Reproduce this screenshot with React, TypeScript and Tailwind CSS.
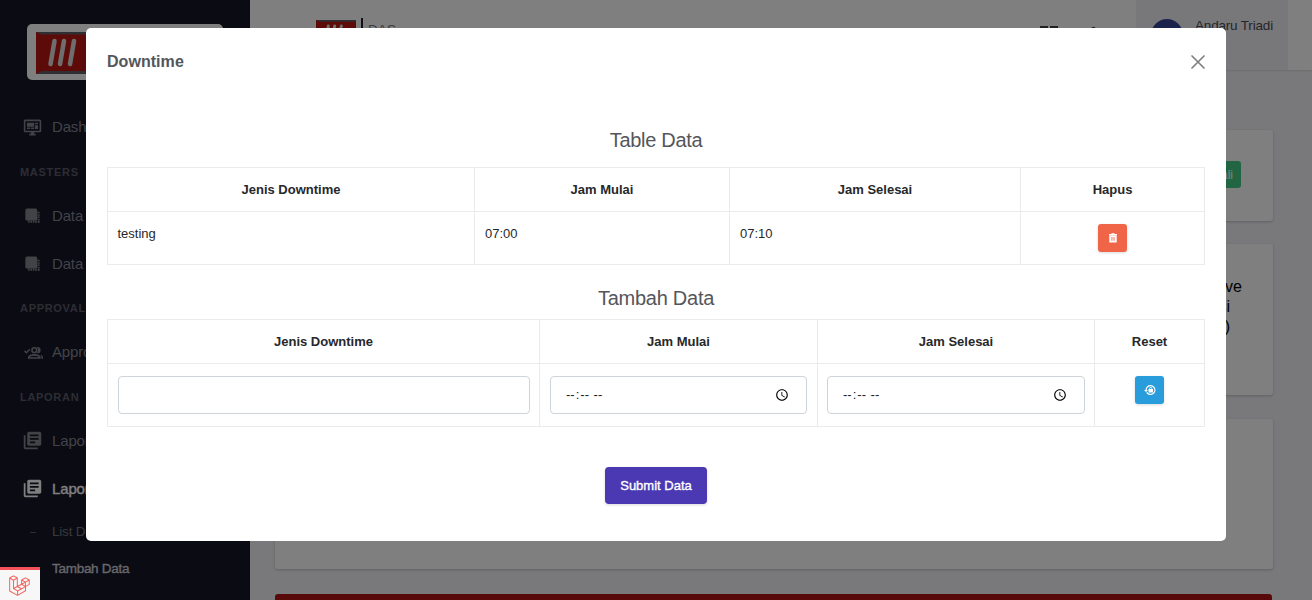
import type { ReactNode } from "react";

function Svg({ className, children }: { className: string; children: ReactNode }) {
  return (
    <svg viewBox="0 0 24 24" fill="currentColor" className={className}>
      {children}
    </svg>
  );
}

const DashboardIcon = () => (
  <Svg className="size-[19px]">
    <path d="M21,16V4H3V16H21M21,2A2,2 0 0,1 23,4V16A2,2 0 0,1 21,18H14V20H16V22H8V20H10V18H3C1.89,18 1,17.1 1,16V4C1,2.89 1.89,2 3,2H21M5,6H14V11H5V6M15,6H19V8H15V6M19,9V14H15V9H19M5,12H9V14H5V12M10,12H14V14H10V12Z" />
  </Svg>
);

const LayersIcon = () => (
  <Svg className="size-[19px]">
    <path d="M5 2H16a2 2 0 0 1 2 2V15a2 2 0 0 1-2 2H5a2 2 0 0 1-2-2V4a2 2 0 0 1 2-2ZM18.500 6h2.500v2h-2.500zM18.500 9h2.500v2h-2.500zM18.500 12h2.500v2h-2.500zM18.500 15h2.500v2h-2.500zM18.500 17.700h2.500v2.300h-2.500zM15.500 17.500h2v2.500h-2zM12.500 17.500h2v2.500h-2zM9.500 17.500h2v2.500h-2zM6.500 17.500h2v2.500h-2z" />
  </Svg>
);

const ApprovalIcon = () => (
  <Svg className="ml-px size-[19px]">
    <path d="M13 5a4 4 0 1 1 0 8 4 4 0 0 1 0-8Zm0 2a2 2 0 1 0 0 4 2 2 0 0 0 0-4Zm4-2a4 4 0 0 1 0 8l-.9-.1a6 6 0 0 0 0-7.800ZM13 14c2.700 0 8 1.300 8 4v2H5v-2c0-2.700 5.300-4 8-4Zm0 2c-3 0-6 1.200-6 2h12c0-.8-3-2-6-2Zm7-1.600c2 .6 4 1.700 4 3.600v2h-2v-2c0-1.500-.8-2.700-2-3.600ZM3 13.500 0 10.600 1.300 9.300 3 11 6.700 7.300 8 8.600Z" />
  </Svg>
);

const BooksIcon = () => (
  <Svg className="-mt-px size-[21px] -translate-x-px">
    <path d="M4 6H2v14c0 1.100.9 2 2 2h14v-2H4V6zm16-4H8c-1.100 0-2 .9-2 2v12c0 1.100.9 2 2 2h12c1.100 0 2-.9 2-2V4c0-1.100-.9-2-2-2zm-1 9H9V9h10v2zm-4 4H9v-2h6v2zm4-8H9V5h10v2z" />
  </Svg>
);

function NavItem({ icon, label, active }: { icon: ReactNode; label: string; active?: boolean }) {
  return (
    <div className={`flex h-12 items-center pl-[23px] text-[15px] ${active ? "text-white [-webkit-text-stroke:0.35px_currentColor]" : "text-[#85868f]"}`}>
      <span className="flex w-[29px] items-center">{icon}</span>
      <span className="whitespace-nowrap tracking-[-0.15px]">{label}</span>
    </div>
  );
}

function NavTitle({ children }: { children: string }) {
  return (
    <div className="flex h-[40.5px] items-center pl-5 text-[11px] font-bold tracking-[0.7px] text-[#5b5b66]">
      {children}
    </div>
  );
}

function BrandMark({ className }: { className: string }) {
  return (
    <svg viewBox="0 0 60 42" preserveAspectRatio="none" className={className}>
      <path fill="#5e5c64" d="M0 0H60V42H0Z" />
      <path fill="#bb1712" d="M0 0 6 2.500H60V39H6L0 42Z" />
      <path stroke="#ddd" strokeWidth="4.500" strokeLinecap="round" d="M18.500 9 14.500 32M28 9 24 32M38 9 34 32" />
    </svg>
  );
}

function Sidebar() {
  return (
    <aside className="flex w-[250px] shrink-0 flex-col bg-[#141627]">
      <div className="mt-6 ml-[27px] flex h-14 w-[196px] items-center rounded-[5px] bg-white pt-px pl-[9px]">
        <BrandMark className="h-[42px] w-[60px]" />
      </div>
      <nav className="mt-[23.500px] flex flex-col">
        <NavItem icon={<DashboardIcon />} label="Dashboard" />
        <NavTitle>MASTERS</NavTitle>
        <NavItem icon={<LayersIcon />} label="Data" />
        <NavItem icon={<LayersIcon />} label="Data" />
        <NavTitle>APPROVAL</NavTitle>
        <NavItem icon={<ApprovalIcon />} label="Approval" />
        <NavTitle>LAPORAN</NavTitle>
        <NavItem icon={<BooksIcon />} label="Laporan" />
        <NavItem icon={<BooksIcon />} label="Laporan" active />
        <div className="flex h-[37px] items-center pt-px pl-[30px] text-[13.500px] tracking-[-0.2px] text-[#73747e]">
          <span className="mr-4 h-px w-[6px] bg-[#5b5c66]" />
          List Data
        </div>
        <div className="flex h-[37px] items-center pt-px pl-[52px] text-[13.500px] tracking-[-0.28px] text-[#cfcfd6] [-webkit-text-stroke:0.35px_currentColor]">
          Tambah Data
        </div>
      </nav>
    </aside>
  );
}

function Header() {
  return (
    <header className="flex h-[70px] shrink-0 items-start bg-white pl-[66px] shadow-[0_1px_2px_rgba(56,65,74,0.15)]">
      <div className="mt-[20px] flex">
        <BrandMark className="h-[28px] w-[40px]" />
      </div>
      <div className="mt-[18px] ml-[5px] h-8 w-[2px] bg-[#222]" />
      <div className="mt-[22px] ml-[5px] text-[13.500px] leading-4 tracking-[0.1px] text-[#777]">DAS</div>
      <div className="ml-auto flex h-[70px]">
        <div className="mt-[26px] mr-[36px] flex gap-[29px] text-[#444]">
          <svg className="h-5 w-[18px]" viewBox="0 0 18 20" fill="none" stroke="currentColor" strokeWidth="2">
            <path d="M1 1H7V7H1ZM11 1H17V7H11ZM1 11H7V17H1ZM11 11H17V17H11Z" />
          </svg>
          <svg className="h-5 w-[13px]" viewBox="0 0 14 20" fill="currentColor">
            <path d="M5 1Q7-1 9 1Q13 3 13 9V15H1V9Q1 3 5 1Z" />
          </svg>
        </div>
        <div className="mr-6 flex w-[152px] bg-[#f0f0f5] pl-[15px]">
          <div className="mt-[19px] flex size-8 items-center justify-center rounded-full bg-[#37479a] text-[17px] font-bold text-[#bcc5ec]">
            AT
          </div>
          <span className="mt-4 ml-3 text-[13.500px] leading-5 tracking-[-0.18px] text-[#4c4c52]">Andaru Triadi</span>
        </div>
      </div>
    </header>
  );
}

function PageContent() {
  const card = "bg-white rounded-[3px] shadow-[0_1px_3px_rgba(30,32,37,0.25)]";
  return (
    <main className="flex flex-col pt-[60px] pr-[39px] pl-[25px]">
      <section className={`${card} flex h-[91px] justify-end pt-[31px] pr-8`}>
        <div className="flex h-[27px] items-center rounded-[3px] bg-[#45cb85] px-2 text-[12px] text-white">Kembali</div>
      </section>
      <section className={`${card} mt-[23px] flex h-[151px] justify-end pt-[33px] pr-[31px]`}>
        <div className="w-[80px] text-[16px] leading-[20px] text-black">
          <div className="text-right">Productive</div>
          <div className="pr-3 text-right">Produksi</div>
          <div className="pr-3 text-right">(menit)</div>
        </div>
      </section>
      <section className={`${card} mt-6 h-[150px]`} />
      <section className="mt-[25px] mr-px h-12 rounded-[3px] bg-[#b01414]" />
    </main>
  );
}

const cell = "border border-[#e9ebec]";

function HeadRow({ labels }: { labels: string[] }) {
  return (
    <thead>
      <tr className="h-11">
        {labels.map((label) => (
          <th key={label} className={`${cell} text-center font-bold`}>
            {label}
          </th>
        ))}
      </tr>
    </thead>
  );
}

function TimeInput({ label }: { label: string }) {
  return (
    <input
      type="time"
      aria-label={label}
      className="block h-[38px] w-full rounded-[4px] border border-[#ced4da] bg-white px-[14px] py-2 text-[13px] text-[#212529]"
    />
  );
}

function DowntimeModal() {
  return (
    <div
      role="dialog"
      className="absolute top-7 left-[86px] flex h-[513px] w-[1140px] flex-col rounded-[5px] bg-white px-[21px] text-[13px] text-[#26282b]"
    >
      <div className="flex h-[67px] items-center justify-between">
        <h5 className="text-[16px] font-bold tracking-[0.05px] text-[#54565b]">Downtime</h5>
        <button aria-label="Close" className="mr-[-1px]">
          <svg viewBox="0 0 16 16" className="size-4" stroke="#808080" strokeWidth="1.700" strokeLinecap="round">
            <path d="M2 2 14 14M14 2 2 14" />
          </svg>
        </button>
      </div>
      <h4 className="mt-[33px] text-center text-[20px] leading-6 tracking-[-0.3px] text-[#54565b]">Table Data</h4>
      <table className="mt-[15px] w-[1098px] table-fixed border-collapse">
        <colgroup>
          <col className="w-[367px]" />
          <col className="w-[255px]" />
          <col className="w-[291px]" />
          <col className="w-[184px]" />
        </colgroup>
        <HeadRow labels={["Jenis Downtime", "Jam Mulai", "Jam Selesai", "Hapus"]} />
        <tbody>
          <tr className="h-[53px] align-top">
            <td className={`${cell} px-[9.500px] pt-3`}>testing</td>
            <td className={`${cell} px-[10px] pt-3`}>07:00</td>
            <td className={`${cell} px-[10px] pt-3`}>07:10</td>
            <td className={`${cell} pt-3`}>
              <button aria-label="Hapus" className="mx-auto flex h-7 w-[29px] items-center justify-center rounded-[3px] bg-[#f06548] text-white shadow-[0_1px_3px_rgba(0,0,0,0.15)]">
                <svg viewBox="0 0 10 10" className="size-[10px]" fill="currentColor">
                  <path fillRule="evenodd" d="M1 1H3.500V.3H6.500V1H9V2.300H1ZM1.300 2.500H8.700V9.500H1.300ZM3.500 4H4.400V7.700H3.500ZM5.600 4H6.500V7.700H5.600Z" />
                </svg>
              </button>
            </td>
          </tr>
        </tbody>
      </table>
      <h4 className="mt-[21px] text-center text-[20px] leading-6 tracking-[-0.25px] text-[#54565b]">Tambah Data</h4>
      <table className="mt-[9px] w-[1098px] table-fixed border-collapse">
        <colgroup>
          <col className="w-[432px]" />
          <col className="w-[278px]" />
          <col className="w-[277px]" />
          <col className="w-[110px]" />
        </colgroup>
        <HeadRow labels={["Jenis Downtime", "Jam Mulai", "Jam Selesai", "Reset"]} />
        <tbody>
          <tr className="h-[63px] align-top">
            <td className={`${cell} pt-3 pr-[9px] pl-[10px]`}>
              <input aria-label="Jenis Downtime" className="block h-[38px] w-full rounded-[4px] border border-[#ced4da] px-3" />
            </td>
            <td className={`${cell} px-[10px] pt-3`}>
              <TimeInput label="Jam Mulai" />
            </td>
            <td className={`${cell} px-[9px] pt-3`}>
              <TimeInput label="Jam Selesai" />
            </td>
            <td className={`${cell} pt-3`}>
              <button aria-label="Reset" className="mx-auto flex h-7 w-[29px] items-center justify-center rounded-[3px] bg-[#299cdb] text-white shadow-[0_1px_3px_rgba(0,0,0,0.15)]">
                <svg viewBox="0 0 24 24" className="size-[12px]" fill="currentColor">
                  <path d="M13 2a10 10 0 1 1-8.500 15.300l2-1.300A7.600 7.600 0 1 0 5.400 12H8L4 16 0 12H3A10 10 0 0 1 13 2ZM10.500 10V9a3 3 0 0 1 6 0v1h1.500v7h-9V10ZM12 10h3V9a1.500 1.500 0 0 0-3 0Z" />
                </svg>
              </button>
            </td>
          </tr>
        </tbody>
      </table>
      <button className="mx-auto mt-[40px] h-[37px] w-[102px] rounded-[4px] bg-[#4b38b3] text-[13px] text-white shadow-[0_1px_3px_rgba(0,0,0,0.15)] [-webkit-text-stroke:0.35px_currentColor]">
        Submit Data
      </button>
    </div>
  );
}

function LaravelBadge() {
  return (
    <div className="absolute bottom-0 left-0 flex h-[33px] w-10 items-center justify-center border-t-[3px] border-[#f4515b] bg-[#f7f7f7]">
      <svg viewBox="0 0 22 22" className="mr-px size-[21px]" fill="none" stroke="#f4645f" strokeWidth="1.050" strokeLinejoin="round">
        <path d="M.7 3.200 4.700.9 8.700 3.200 4.700 5.500ZM.7 3.200V16.700L9 21.300 17.300 16.500V12.200L9 16.700 4.700 14.200V5.500M8.700 3.200V12L4.700 14.200M9 16.700V21.300M8.700 12 13.200 9.700 17.300 12.200M13.200 9.700V5.200L17.200 3 21.200 5.200 17.200 7.500ZM13.200 5.200 17.200 7.500V12.200L21.200 9.800V5.200M8.700 12 13 14.400" />
      </svg>
    </div>
  );
}

export default function App() {
  return (
    <div className="relative flex h-[600px] w-[1312px] overflow-hidden bg-[#f3f3f7] font-['Liberation_Sans',Arial,sans-serif]">
      <Sidebar />
      <div className="flex min-w-0 flex-1 flex-col">
        <Header />
        <PageContent />
      </div>
      <div className="absolute inset-0 bg-black/50" />
      <DowntimeModal />
      <LaravelBadge />
    </div>
  );
}
